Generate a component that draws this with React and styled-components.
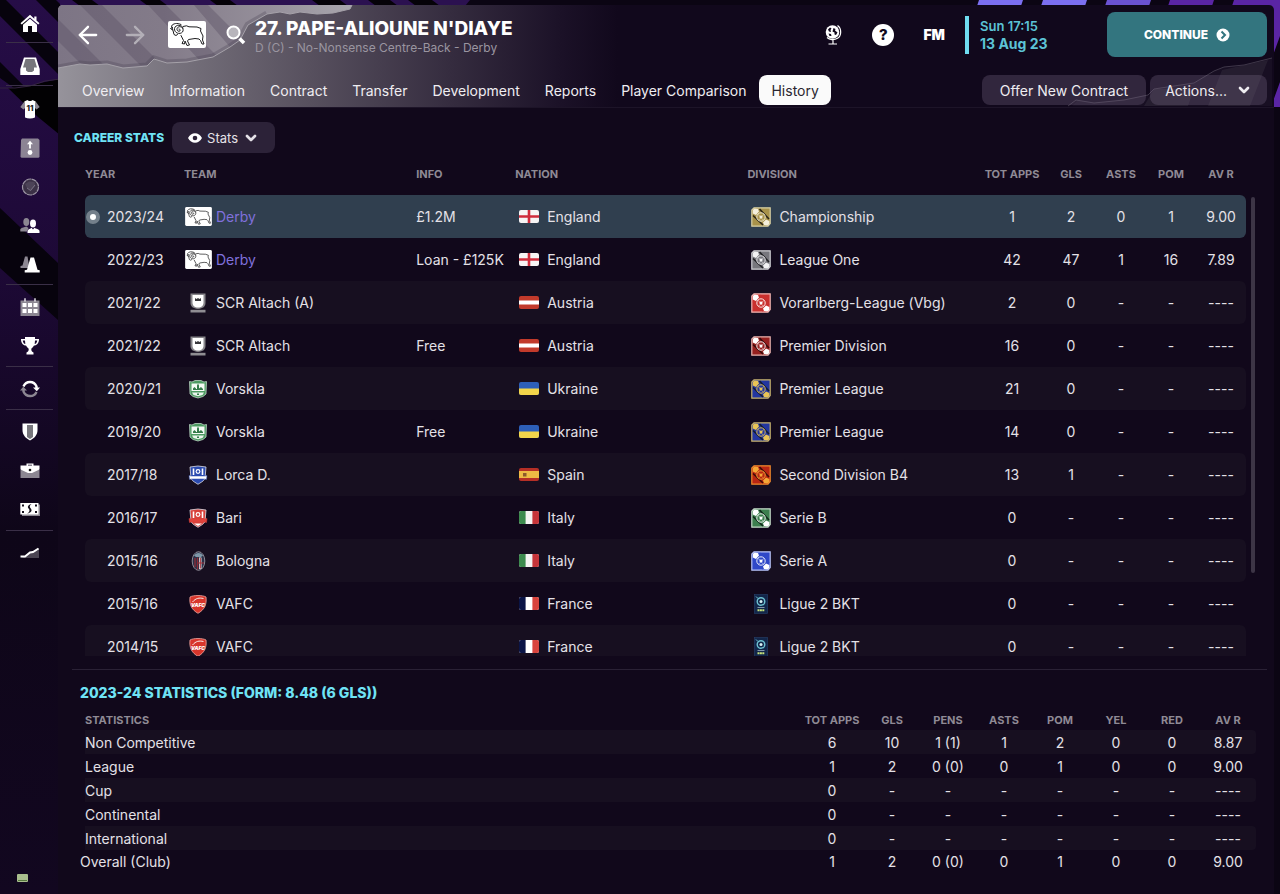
import React, { useState } from 'react'
import styled, { createGlobalStyle, css } from 'styled-components';
import { ArrowLeft, ArrowRight, ChevronDown } from 'lucide-react';

const careerRows = [
  { year: "2023/24", team: "Derby", crest: "derby", own: true, info: "£1.2M", nation: "England", division: "Championship", badge: "gold", stats: ["1", "2", "0", "1", "9.00"] },
  { year: "2022/23", team: "Derby", crest: "derby", own: true, info: "Loan - £125K", nation: "England", division: "League One", badge: "silver", stats: ["42", "47", "1", "16", "7.89"] },
  { year: "2021/22", team: "SCR Altach (A)", crest: "altach", info: "", nation: "Austria", division: "Vorarlberg-League (Vbg)", badge: "red", stats: ["2", "0", "-", "-", "----"] },
  { year: "2021/22", team: "SCR Altach", crest: "altach", info: "Free", nation: "Austria", division: "Premier Division", badge: "darkred", stats: ["16", "0", "-", "-", "----"] },
  { year: "2020/21", team: "Vorskla", crest: "vorskla", info: "", nation: "Ukraine", division: "Premier League", badge: "bluegold", stats: ["21", "0", "-", "-", "----"] },
  { year: "2019/20", team: "Vorskla", crest: "vorskla", info: "Free", nation: "Ukraine", division: "Premier League", badge: "bluegold", stats: ["14", "0", "-", "-", "----"] },
  { year: "2017/18", team: "Lorca D.", crest: "lorca", info: "", nation: "Spain", division: "Second Division B4", badge: "orange", stats: ["13", "1", "-", "-", "----"] },
  { year: "2016/17", team: "Bari", crest: "bari", info: "", nation: "Italy", division: "Serie B", badge: "green", stats: ["0", "-", "-", "-", "----"] },
  { year: "2015/16", team: "Bologna", crest: "bologna", info: "", nation: "Italy", division: "Serie A", badge: "blue", stats: ["0", "-", "-", "-", "----"] },
  { year: "2015/16", team: "VAFC", crest: "vafc", info: "", nation: "France", division: "Ligue 2 BKT", badge: "ligue2", stats: ["0", "-", "-", "-", "----"] },
  { year: "2014/15", team: "VAFC", crest: "vafc", info: "", nation: "France", division: "Ligue 2 BKT", badge: "ligue2", stats: ["0", "-", "-", "-", "----"] },
];

const seasonRows = [
  { name: "Non Competitive", stats: ["6", "10", "1 (1)", "1", "2", "0", "0", "8.87"] },
  { name: "League", stats: ["1", "2", "0 (0)", "0", "1", "0", "0", "9.00"] },
  { name: "Cup", stats: ["0", "-", "-", "-", "-", "-", "-", "----"] },
  { name: "Continental", stats: ["0", "-", "-", "-", "-", "-", "-", "----"] },
  { name: "International", stats: ["0", "-", "-", "-", "-", "-", "-", "----"] },
];
const overall = ["1", "2", "0 (0)", "0", "1", "0", "0", "9.00"];

const tabs = ["Overview", "Information", "Contract", "Transfer", "Development", "Reports", "Player Comparison", "History"];

const badgeColors = {
  gold: { bg: "#a8924a", mark: "#f4efdc", line: "#d8cfa4", dark: "#2c2617" },
  silver: { bg: "#77777d", mark: "#f2f2f4", line: "#cfcfd4", dark: "#232327" },
  red: { bg: "#c9302e", mark: "#ffffff", line: "#f0b6b3", dark: "#c9302e" },
  darkred: { bg: "#96201f", mark: "#ffffff", line: "#e6b3b0", dark: "#3a0b0b" },
  bluegold: { bg: "#2336a0", mark: "#e9c455", line: "#c9b36a", dark: "#131c33" },
  orange: { bg: "#b92613", mark: "#f5a836", line: "#f08a2c", dark: "#3f0d06" },
  green: { bg: "#3c7f4e", mark: "#ffffff", line: "#c5d9c9", dark: "#10291a" },
  blue: { bg: "#2f48c8", mark: "#ffffff", line: "#b9c4f4", dark: "#2f48c8" },
};

const RamBadge = ({ width, height }) => (
  <svg width={width} height={height} viewBox="0 0 38 27" aria-hidden="true">
    <rect width="38" height="27" rx="2" fill="#fff" />
    <g fill="none" stroke="#1c1c1e" strokeWidth="1" strokeLinejoin="round" strokeLinecap="round">
      <path d="M15 5.500L18.500 4.800L21 5.800L29 6L33 7.500L32.500 10L35 15L34.500 19L36 23L34 23L32.500 19.500L31 18L27 17.500L20.500 18.500L19.500 20L21.500 24L19 24.500L17 20L16.500 23L14 22.500L15.500 19.500L13 14.500" />
      <path d="M13 3.500C9 1.500 5 2.500 3.500 5L5 9.500L6 13.500L8 14.500L9.500 13.500" />
      <path d="M4.500 6.500L2.500 7.500L4.500 9" />
      <path d="M15 7C14 3.500 7.500 3 6.500 7.500C6 12 12 14 14.500 11C16.500 8 13.500 5 10.800 5.800C8 6.800 8.800 10.300 11 10.300C12.800 10 12.500 8 11 8" />
    </g>
  </svg>
);

const Shield = ({ main, band }) => (
  <svg width="20" height="20" viewBox="0 0 20 20" aria-hidden="true">
    <path d="M2 2L10 1L18 2L17 13.500C15.500 16.500 12.500 17.500 10 19.300C7.500 17.500 4.500 16.500 3 13.500Z" fill={main} stroke="#dfe0e8" strokeWidth=".8" />
    <path d="M5.500 3.500V10M14.500 3.500V10" stroke="#fff" strokeWidth="1.600" />
    <circle cx="10" cy="6.500" r="2.400" fill="#fff" />
    <circle cx="10" cy="6.500" r="1.200" fill={main} />
    <path d="M1 10.500L3 11L17 11L19 10.500L18.500 14.500L16.500 14H3.500L1.500 14.500Z" fill={band} stroke={main} strokeWidth=".5" />
    <path d="M6 15.500H14L10 18Z" fill={band === "#ffffff" ? main : "#fff"} />
  </svg>
);

function Crest({ name }) {
  if (name === "derby") return <RamBadge width={27} height={19} />;
  if (name === "altach") return (
    <svg width="20" height="20" viewBox="0 0 20 20" aria-hidden="true">
      <path d="M2.500 0.500H17.500V10C17.500 13.500 15 15.500 10 16C5 15.500 2.500 13.500 2.500 10Z" fill="#87858a" />
      <path d="M4.500 2H15.500V9.500C15.500 12.500 13.500 14.500 10 14.500C6.500 14.500 4.500 12.500 4.500 9.500Z" fill="#fff" />
      <path d="M7 5L8.500 6L10 5L11.500 6L13 5V8H7Z" fill="#39383c" />
      <path d="M2.500 16.800H17.500V19.500H2.500Z" fill="#8f8d92" />
    </svg>
  );
  if (name === "vorskla") return (
    <svg width="20" height="20" viewBox="0 0 20 20" aria-hidden="true">
      <path d="M1.500 2.500L4 3L7 1.500H13L16 3L18.500 2.500L18 15L15 17.500L10 19L5 17.500L2 15Z" fill="#4d9a62" stroke="#cfe6d5" strokeWidth=".7" />
      <path d="M3.500 4.500H16.500V12H3.500Z" fill="#f4faf5" />
      <path d="M5 11V9.500L6.500 8L8 9.500V10H9V6.500L10 4.500L11 6.500V9.500L13 8L15 10V11H5Z" fill="#337a49" />
      <path d="M4 13.500H16L14.500 16L10 17.300L5.500 16Z" fill="#e9f5ec" />
      <path d="M9 14.500H11V16H9Z" fill="#337a49" />
    </svg>
  );
  if (name === "lorca") return <Shield main="#2b4bb0" band="#ffffff" />;
  if (name === "bari") return <Shield main="#d8403a" band="#e0423c" />;
  if (name === "bologna") return (
    <svg width="20" height="20" viewBox="0 0 20 20" aria-hidden="true">
      <ellipse cx="10.500" cy="10" rx="6.300" ry="9.300" fill="#2a3148" stroke="#a8a4ac" strokeWidth=".8" />
      <path d="M6 4.500C8 1 13 1 15 4.500L13 6H8Z" fill="#7e98a8" />
      <path d="M7 7V16M9.500 6.500V18.500" stroke="#8c2a34" strokeWidth="1.300" />
      <path d="M11 6.500H13.500V18H11Z" fill="#e9e4e6" />
      <path d="M10 12H16M12.300 7V17.500" stroke="#a23038" strokeWidth="1.100" />
    </svg>
  );
  return (
    <svg width="20" height="20" viewBox="0 0 20 20" aria-hidden="true">
      <path d="M2 3C5 1 15 1 18 3C19 11 16 16 10 19.300C4 16 1 11 2 3Z" fill="#d8352b" stroke="#eda7a1" strokeWidth=".8" />
      <path d="M4.500 8C8 4 11 3.600 15.500 4.500" fill="none" stroke="#fff" strokeWidth=".9" />
      <text x="10" y="12.500" textAnchor="middle" fontSize="5" fontWeight="900" fontStyle="italic" fill="#fff">VAFC</text>
    </svg>
  );
}

function Flag({ nation }) {
  const id = "flag-" + nation;
  return (
    <svg width="20" height="13" viewBox="0 0 20 13" aria-hidden="true">
      <clipPath id={id}><rect width="20" height="13" rx="2" /></clipPath>
      <g clipPath={`url(#${id})`}>
        {nation === "England" && <><rect width="20" height="13" fill="#f6f4f4" /><path d="M0 6.500H20M10 0V13" stroke="#cf2b3b" strokeWidth="2.600" /></>}
        {nation === "Austria" && <><rect width="20" height="13" fill="#c23a2b" /><path d="M0 6.500H20" stroke="#fff" strokeWidth="4" /></>}
        {nation === "Ukraine" && <><rect width="20" height="13" fill="#2d5fb8" /><rect y="6.500" width="20" height="7" fill="#f2d54a" /></>}
        {nation === "Spain" && <><rect width="20" height="13" fill="#b52f26" /><rect y="3" width="20" height="7" fill="#edbb44" /><path d="M4 5H7.500V8.500H4Z" fill="#8d5a2b" /></>}
        {nation === "Italy" && <><rect width="20" height="13" fill="#f4f4f2" /><rect width="6.600" height="13" fill="#3d8b4e" /><rect x="13.400" width="7" height="13" fill="#c6353a" /></>}
        {nation === "France" && <><rect width="20" height="13" fill="#fff" /><rect width="6.600" height="13" fill="#0a1446" /><rect x="13.400" width="7" height="13" fill="#d8433d" /></>}
      </g>
    </svg>
  );
}

function DivisionBadge({ type }) {
  if (type === "ligue2") return (
    <svg width="20" height="20" viewBox="0 0 20 20" aria-hidden="true">
      <rect x="3.300" y=".5" width="13.400" height="19" fill="#12264a" stroke="#27406a" strokeWidth=".6" />
      <circle cx="10" cy="7.500" r="3.800" fill="none" stroke="#6fc3d2" strokeWidth="1.400" />
      <circle cx="10" cy="7.500" r="1.500" fill="#d8f2f5" />
      <path d="M5 2.500L7 4.500" stroke="#6fc3d2" />
      <path d="M6.500 13.500H13.500" stroke="#8fa2b8" strokeWidth=".9" />
      <path d="M6.500 16.300H13.500" stroke="#c8e27a" strokeWidth="2" strokeDasharray="2 .4" />
    </svg>
  );
  const c = badgeColors[type];
  return (
    <svg width="20" height="20" viewBox="0 0 20 20" aria-hidden="true">
      <path d="M3 .8H19.200V16.500L17 19.200H.8V3Z" fill={c.bg} stroke={c.line} strokeWidth="1.200" />
      <path d="M8.500 2L18 12M2 8.500L12 18" stroke={c.dark} strokeWidth="1.600" />
      <path d="M1.800 3L3.500 1.600L7 2L8 4.500L5 8L1.800 6.500Z" fill={c.mark} />
      <path d="M18.300 17L16.500 18.500L13 18L12 15.500L15 12.500L18.300 14Z" fill={c.mark} />
      <circle cx="10" cy="10" r="4.200" fill={c.bg} stroke={c.mark} strokeWidth=".9" />
      <path d="M7 7.500L9 9M13 7.500L11 9M8 13L9 11.500M12 13L11 11.500" stroke={c.line} strokeWidth=".7" />
      <path d="M10 8.300L11.700 9.500L11 11.500H9L8.300 9.500Z" fill={c.mark} />
    </svg>
  );
}

const Icon = ({ children }) => (
  <svg width="20" height="20" viewBox="0 0 20 20" fill="#fff" aria-hidden="true">{children}</svg>
);

// each inner array is one block of the sidebar, a line is drawn between blocks
const sideMenu = [
  [["Home", <Icon><path d="M10 1.800L.5 10.300L1.800 11.600L10 4.400L18.200 11.600L19.500 10.300L16.500 7.600V3.500H14.300V5.700Z" /><path d="M3 11.800L10 5.800L17 11.800V19H12V13H8V19H3Z" /></Icon>]],
  [["Inbox", <Icon><path d="M4 1.500H16L19.700 13V19H.3V13Z" /><path d="M5.500 3H14.500L17 11.500H14V14.500L12 16H8L6 14.500V11.500H3Z" fill="#77767c" /></Icon>]],
  [
    ["Squad", <Icon><path d="M4 3L.3 8L3.500 10.500L5 9ZM16 3L19.700 8L16.500 10.500L15 9Z" fill="#8c8792" /><path d="M4.300 2.500L7.500 1C8.500 2.300 11.500 2.300 12.500 1L15.700 2.500L15 10V18.500C12 19.800 8 19.800 5 18.500V10Z" /><text x="10" y="12" textAnchor="middle" fontSize="8" fontWeight="800" fill="#222">11</text></Icon>],
    ["Tactics", <Icon><path d="M2 .5H18L19.500 2V19L18.500 19.800H1.500L.5 19L1 2Z" fill="#8c8494" /><path d="M10 2.800L13 6.300H10.900V10.500H9.100V6.300H7Z" /><circle cx="10" cy="14.500" r="2.400" /></Icon>],
    ["Dynamics", <Icon><circle cx="10.500" cy="10" r="8" fill="#3b3146" stroke="#9c95a4" strokeWidth="1.200" strokeDasharray="5 .5" /><path d="M5 7L9 4.500L14.500 5L15 9L11 14L9.500 12L7 11Z" fill="#4c4357" /><path d="M15 8L10.500 13.500L7 11" fill="none" stroke="#857d8f" strokeWidth=".8" /></Icon>],
    ["Staff", <Icon><g fill="#8c8792"><ellipse cx="6.300" cy="6" rx="3" ry="4" /><path d="M.3 15.500V13C2 11.500 4.500 11.500 6.300 10.500L8.500 12L7 15.500Z" /></g><ellipse cx="13" cy="7.500" rx="3" ry="4" /><path d="M7.500 17V15C8 13 10.500 13 11.500 11.800L13 13.500L14.500 11.800C16 13 19 13 19.500 15V17Z" /></Icon>],
    ["Training", <Icon><path d="M5 1.500H7.500L9.500 13H.5V11L2.500 10.500Z" fill="#8c8792" /><path d="M10.500 2.500H14L17.500 14.800L19.700 15.300V17.500H4.700V15.300L7 14.800Z" /></Icon>],
  ],
  [
    ["Schedule", <Icon><path d="M.5 2.500H19.500V18H.5Z" fill="#8c8792" /><path d="M2.500 5H6.500V9H2.500ZM8 5H12V9H8ZM13.500 5H17.500V9H13.500ZM2.500 11H6.500V15H2.500ZM8 11H12V15H8ZM13.500 11H17.500V15H13.500Z" /><path d="M5 .3V3.500M15 .3V3.500" stroke="#fff" strokeWidth="1.300" /></Icon>],
    ["Competitions", <Icon><path d="M5 0H15V2H19C19 6 17 8.500 14 8.500C13 10.500 11.500 11 11.300 12C11.300 13.500 11.500 14.500 13.500 15.500V17.500H6.500V15.500C8.500 14.500 8.700 13.500 8.700 12C8.500 11 7 10.500 6 8.500C3 8.500 1 6 1 2H5ZM2.700 3.500C3 5.500 4 6.800 5.300 7L5 3.500ZM15 3.500L14.700 7C16 6.800 17 5.500 17.300 3.500Z" fillRule="evenodd" /></Icon>],
  ],
  [["Transfers", <Icon><path d="M3.500 6.500C6 .5 14 .5 16.500 6.500V8" fill="none" stroke="#fff" strokeWidth="2.400" /><path d="M13 7.500H20L16.800 11.300Z" /><path d="M16.500 12C14 17.500 6 17.500 3.500 11.500V10" fill="none" stroke="#8c8792" strokeWidth="2.400" /><path d="M0 10.500H7L3.300 6.800Z" fill="#8c8792" /></Icon>]],
  [
    ["Club", <Icon><path d="M2.500 .5H17.500V7C17.500 12 14.500 15 10 17.500C5.500 15 2.500 12 2.500 7Z" /><path d="M7 2H13V14L10 16L7 14Z" fill="#77767c" /></Icon>],
    ["Board", <Icon><path d="M.5 8H19.500V16H.5Z" fill="#8c8792" /><path d="M.5 3.500H6.500V1.500H13.500V3.500H19.500V7.500L12 11H8L.5 7.500ZM8 2.700V3.500H12V2.700Z" fillRule="evenodd" /><circle cx="10" cy="8" r="1.300" fill="#111" /></Icon>],
    ["Finances", <Icon><path d="M2 3.500H20V15H2Z" fill="#8c8792" /><path d="M.3 2H18.500V13.500H.3Z" /><path d="M2 3.500H4V5.500H2ZM15 3.500H17V5.500H15ZM2 10H4V12H2ZM15 10H17V12H15ZM11.500 3C7.500 4 7 6.500 9 8C10 9.500 9.500 11 7 12.800C11.500 11.500 12.500 9.500 10.800 7.500C9.300 6 9.500 4.500 11.500 3Z" fill="#15101c" /></Icon>],
  ],
  [["Data Hub", <Icon><path d="M1 14L6 12L12 8L19 4V14Z" fill="#4a4452" /><path d="M.5 12.500H5L10 8.500L13 8L18.500 4.500" fill="none" stroke="#fff" strokeWidth="2" /></Icon>]],
];

function PlayerHeader() {
  return (
    <Header>
      <TornPaper viewBox="0 0 560 102" preserveAspectRatio="xMinYMin slice" aria-hidden="true">
        <defs>
          <linearGradient id="fade" x1="0" x2="1">
            <stop offset="0" stopColor="#96939b" />
            <stop offset=".25" stopColor="#716c77" />
            <stop offset=".45" stopColor="#57505e" />
            <stop offset=".7" stopColor="#352c3f" />
            <stop offset=".9" stopColor="#1b1127" />
            <stop offset="1" stopColor="#11081c" />
          </linearGradient>
          <linearGradient id="sheet" x1="0" x2="1">
            <stop offset="0" stopColor="#7d7585" />
            <stop offset=".35" stopColor="#837b89" />
            <stop offset=".7" stopColor="#958f9a" />
            <stop offset="1" stopColor="#aaa7ae" />
          </linearGradient>
          <clipPath id="torn">
            <path d="M0 63L22 59L32 60L49 59L65 63L89 61L96 54L109 58L129 57L155 52L172 42L182 35L190 20L209 9L222 7L232 9L242 7L259 9L275 8L292 4L294 0H0Z" />
          </clipPath>
        </defs>
        <rect width="560" height="102" fill="url(#fade)" />
        <g clipPath="url(#torn)">
          <rect width="300" height="66" fill="url(#sheet)" />
          <path d="M0 14L48 62H26L0 36ZM22 0H44L104 60H82ZM90 0H108L160 52L144 58ZM136 0H150L184 34L172 42Z" fill="#5a5163" opacity=".4" />
          <path d="M0 63L22 59L32 60L49 59L65 63L89 61L96 54L109 58L129 57L155 52L172 42L182 35L190 20L209 9" fill="none" stroke="#4a4253" strokeWidth="7" opacity=".3" />
        </g>
        <path d="M0 63L22 59L32 60L49 59L65 63L89 61L96 54L109 58L129 57L155 52L172 42L182 35L190 20L209 9L222 7L232 9L242 7L259 9L275 8L292 4L294 0" fill="none" stroke="#a5a1a9" />
      </TornPaper>
      <TornCorner viewBox="0 0 210 50" aria-hidden="true">
        <path d="M8 49L14 43L30 46L60 43L84 38L90 32L130 26L150 14L160 10L180 8L208 1V49Z" fill="#ffffff" opacity=".03" />
        <path d="M90 32H130L124 49H80ZM158 13L204 3L186 49H144Z" fill="#fff" opacity=".06" />
        <path d="M4 49L12 43L30 46L60 43L84 38L90 32L130 26L150 14L160 10L180 8L208 1" fill="none" stroke="#3f3749" />
      </TornCorner>
      <TopRow>
        <NavGroup>
          <IconButton aria-label="Back"><ArrowLeft size={28} strokeWidth={2} /></IconButton>
          <IconButton aria-label="Forward" $dim><ArrowRight size={28} strokeWidth={2} /></IconButton>
          <RamBadge width={38} height={27} />
          <IconButton aria-label="Search">
            <svg width="20" height="20" viewBox="0 0 20 20"><circle cx="7.500" cy="7.500" r="6" fill="#b8b5bc" stroke="#fff" strokeWidth="2" /><path d="M13.500 13.500L18 18" stroke="#fff" strokeWidth="3.500" /></svg>
          </IconButton>
        </NavGroup>
        <Title>
          <h1>27. PAPE-ALIOUNE N'DIAYE</h1>
          <p>D (C) - No-Nonsense Centre-Back - Derby</p>
        </Title>
        <Tools>
          <IconButton aria-label="World">
            <svg width="20" height="22" viewBox="0 0 20 22"><circle cx="9.500" cy="8" r="6.800" fill="#fff" /><path d="M5 5.500L7 3.500L8.500 4.500L7.500 6L8 8L6 7.500ZM10.500 4L12.500 5L12 6.500L14.500 8.500L13 11L11.500 10.500L11.500 8.500L9.500 7.500ZM5.500 9.500L8 10L8.500 12L6.500 12Z" fill="#11081c" /><path d="M14.500 1.500C19 4.500 18.500 12 14.500 14.300C11 16.500 6.500 16 4 13.500M10 15.500V19.500M5.500 20H14" fill="none" stroke="#fff" strokeWidth="1.200" /></svg>
          </IconButton>
          <HelpButton aria-label="Help">?</HelpButton>
          <FmButton>FM</FmButton>
        </Tools>
        <DateBlock>
          <span>Sun 17:15</span>
          <strong>13 Aug 23</strong>
        </DateBlock>
        <ContinueButton>
          CONTINUE
          <svg width="14" height="14" viewBox="0 0 14 14" aria-hidden="true"><circle cx="7" cy="7" r="6.500" fill="#fff" /><path d="M5.500 3.500L9 7L5.500 10.500" fill="none" stroke="#33757f" strokeWidth="2" /></svg>
        </ContinueButton>
      </TopRow>
      <TabRow>
        <Tabs>
          {tabs.map((tab) => (
            <Tab key={tab} href="#" $active={tab === "History"}>{tab}</Tab>
          ))}
        </Tabs>
        <PanelButton $wide>Offer New Contract</PanelButton>
        <PanelButton aria-haspopup="menu">Actions...<ChevronDown size={16} strokeWidth={4} /></PanelButton>
      </TabRow>
    </Header>
  );
}

function CareerStats() {
  const [offset, setOffset] = useState(0);

  const onScroll = (e) => {
    const { scrollTop, scrollHeight } = e.currentTarget;
    setOffset(scrollTop / scrollHeight * 100);
  }

  return (
    <Career>
      <Toolbar>
        <SectionTitle>CAREER STATS</SectionTitle>
        <ViewPicker>
          <svg width="14" height="10" viewBox="0 0 14 10" aria-hidden="true"><path d="M0 5C3 -1.300 11 -1.300 14 5C11 11.300 3 11.300 0 5Z" fill="#fff" /><circle cx="7" cy="5" r="2.300" fill="#2c2238" /></svg>
          <select aria-label="View" defaultValue="Stats"><option>Stats</option></select>
          <ChevronDown size={16} strokeWidth={4} />
        </ViewPicker>
      </Toolbar>
      <ScrollArea>
        <Scroller onScroll={onScroll}>
          <CareerTable>
            <colgroup>
              <Col $w="99px" /><Col $w="20%" /><Col $w="99px" /><Col $w="20%" /><Col />
              <Col $w="68px" /><Col $w="50px" /><Col $w="50px" /><Col $w="50px" /><Col $w="50px" />
            </colgroup>
            <thead>
              <tr>
                <Th>YEAR</Th><Th>TEAM</Th><Th>INFO</Th><Th>NATION</Th><Th>DIVISION</Th>
                <Th $num>TOT APPS</Th><Th $num>GLS</Th><Th $num>ASTS</Th><Th $num>POM</Th><Th $num>AV R</Th>
              </tr>
            </thead>
            <tbody>
              {careerRows.map((row, i) => (
                <CareerRow key={i} $selected={i === 0} $striped={i % 2 === 0}>
                  <td><YearCell>{i === 0 ? <Bullet /> : <span />}{row.year}</YearCell></td>
                  <td><MediaCell $own={row.own}><Slot><Crest name={row.crest} /></Slot>{row.team}</MediaCell></td>
                  <td>{row.info}</td>
                  <td><MediaCell><Slot><Flag nation={row.nation} /></Slot>{row.nation}</MediaCell></td>
                  <td><MediaCell><Slot><DivisionBadge type={row.badge} /></Slot>{row.division}</MediaCell></td>
                  {row.stats.map((value, n) => <NumCell key={n}>{value}</NumCell>)}
                </CareerRow>
              ))}
            </tbody>
          </CareerTable>
        </Scroller>
        <ScrollTrack><ScrollThumb style={{ top: offset + "%" }} /></ScrollTrack>
      </ScrollArea>
    </Career>
  );
}

function SeasonStats() {
  return (
    <Season>
      <SectionTitle $large>2023-24 STATISTICS (FORM: 8.48 (6 GLS))</SectionTitle>
      <SeasonTable>
        <colgroup>
          <Col /><Col $w="64px" />
          {[1, 2, 3, 4, 5, 6, 7].map((n) => <Col key={n} $w="56px" />)}
        </colgroup>
        <thead>
          <tr>
            <Th>STATISTICS</Th>
            {["TOT APPS", "GLS", "PENS", "ASTS", "POM", "YEL", "RED", "AV R"].map((h) => <Th key={h} $num>{h}</Th>)}
          </tr>
        </thead>
        <tbody>
          {seasonRows.map((row, i) => (
            <SeasonRow key={row.name} $striped={i % 2 === 0}>
              <td>{row.name}</td>
              {row.stats.map((value, n) => <NumCell key={n}>{value}</NumCell>)}
            </SeasonRow>
          ))}
        </tbody>
        <tfoot>
          <tr>
            <td>Overall (Club)</td>
            {overall.map((value, n) => <NumCell key={n}>{value}</NumCell>)}
          </tr>
        </tfoot>
      </SeasonTable>
    </Season>
  );
}

function App() {
  return (
    <Page>
      <GlobalStyle />
      <Backdrop viewBox="0 0 1280 894" preserveAspectRatio="xMinYMin slice" aria-hidden="true">
        <defs>
          <linearGradient id="side" x1="0" x2="0" y1="0" y2="1">
            <stop offset="0" stopColor="#260d47" />
            <stop offset=".3" stopColor="#1d0936" />
            <stop offset=".6" stopColor="#0e0618" />
            <stop offset="1" stopColor="#120720" />
          </linearGradient>
        </defs>
        <rect width="1280" height="894" fill="#0b0513" />
        <rect width="60" height="894" fill="url(#side)" />
        <path d="M0 0H6L60 54V76L0 16ZM36 0H56L60 4V24ZM0 62L24 86L14 88L0 78ZM0 208L58 263V320L0 268Z" fill="#07030d" />
        <path d="M8 88L30 86L45 82L60 79V135L38 117Z" fill="#020103" />
        <path d="M0 88L15 88L30 86L45 81L60 79" fill="none" stroke="#33233f" />
        <path d="M60 0H470L465 6H60Z" fill="#2b1150" />
        <path d="M72 0H92L100 6H80ZM140 0H160L168 6H148ZM210 0H230L238 6H218ZM312 0H340L348 6H320ZM368 0H390L398 6H376ZM408 0H432L440 6H416Z" fill="#050208" />
        <path d="M979 0H1023L1021 6H977ZM1043 0H1087L1085 6H1041Z" fill="#7b6ff0" />
        <path d="M1107 0H1151L1149 6H1105Z" fill="#6a52d2" />
        <path d="M1170 0H1214L1212 6H1168ZM1234 0H1280V36L1272 58V6H1232ZM1280 82V107H1272V104Z" fill="#5a25a5" />
      </Backdrop>
      <Sidebar>
        {sideMenu.map((block, i) => (
          <SideBlock key={i}>
            {block.map(([label, icon]) => <SideButton key={label} aria-label={label}>{icon}</SideButton>)}
          </SideBlock>
        ))}
        <Status aria-hidden="true">
          <svg width="12" height="9" viewBox="0 0 12 9"><rect width="11" height="8" rx="1" fill="#a9be8e" /><path d="M1 6H10V7H1Z" fill="#56793d" /></svg>
        </Status>
      </Sidebar>
      <Main>
        <PlayerHeader />
        <Body>
          <CareerStats />
          <SeasonStats />
        </Body>
      </Main>
    </Page>
  )
}

export default App

const GlobalStyle = createGlobalStyle`
  *, *::before, *::after {
    box-sizing: border-box;
  }
  body {
    margin: 0;
    background-color: #0b0513;
    color: #e4e1e7;
    font-family: Inter, "Liberation Sans", sans-serif;
    font-size: 14px;
  }
  button, select {
    font: inherit;
    color: inherit;
    background: none;
    border: none;
    padding: 0;
    cursor: pointer;
  }
  h1, h2, p {
    margin: 0;
  }
`;

const Page = styled.div`
  position: relative;
  display: flex;
  height: 100vh;
`;

const Backdrop = styled.svg`
  position: absolute;
  top: 0;
  left: 0;
  width: 100%;
  height: 100%;
`;

const Sidebar = styled.nav`
  position: relative;
  display: flex;
  flex-direction: column;
  flex: 0 0 58px;
  padding: 3px 5px 0 6px;
`;

const SideBlock = styled.div`
  display: flex;
  flex-direction: column;
  & + & {
    border-top: 1px solid #3a2f47;
    padding-top: 3px;
  }
`;

const SideButton = styled.button`
  display: flex;
  align-items: center;
  justify-content: center;
  height: 39px;
`;

const Status = styled.div`
  margin-top: auto;
  padding: 0 0 8px 11px;
`;

const Main = styled.main`
  position: relative;
  display: flex;
  flex-direction: column;
  flex: 1;
  min-width: 0;
  margin: 5px 6px 0 0;
`;

const Header = styled.header`
  position: relative;
  padding: 7px 7px 2px 12px;
  overflow: hidden;
  border-radius: 5px 5px 0 0;
  background-color: #11081c;
`;

const TornPaper = styled.svg`
  position: absolute;
  top: 0;
  left: 0;
  width: 560px;
  height: 102px;
`;

const TornCorner = styled.svg`
  position: absolute;
  right: 0;
  bottom: 0;
  width: 210px;
  height: 50px;
`;

const TopRow = styled.div`
  position: relative;
  display: flex;
  align-items: center;
  height: 45px;
`;

const NavGroup = styled.div`
  display: flex;
  align-items: center;
  gap: 20px;
  padding: 0 11px 0 4px;
`;

const IconButton = styled.button`
  display: flex;
  align-items: center;
  justify-content: center;
  color: ${(props) => (props.$dim ? "#b3afb7" : "#ffffff")};
  .lucide {
    margin-right: -1px;
  }
`;

const Title = styled.div`
  padding-top: 4px;
  margin-left: -2px;
  h1 {
    color: white;
    font-size: 19px;
    font-weight: 800;
    line-height: 22px;
  }
  p {
    color: #9a95a0;
    font-size: 12px;
    line-height: 16px;
  }
`;

const Tools = styled.div`
  display: flex;
  align-items: center;
  gap: 29px;
  margin-left: auto;
`;

const HelpButton = styled.button`
  width: 22px;
  height: 22px;
  border-radius: 50%;
  background-color: white;
  color: #11081c;
  font-size: 15px;
  font-weight: 800;
`;

const FmButton = styled.button`
  color: white;
  font-size: 14px;
  font-weight: 900;
`;

const DateBlock = styled.div`
  display: flex;
  flex-direction: column;
  justify-content: center;
  width: 142px;
  height: 38px;
  margin-left: 20px;
  padding-left: 11px;
  border-left: 4px solid #6fdcf0;
  color: #5cc3d6;
  line-height: 17px;
  span {
    font-size: 13px;
    font-weight: 600;
  }
  strong {
    font-size: 14px;
    font-weight: 700;
  }
`;

const ContinueButton = styled.button`
  display: flex;
  align-items: center;
  justify-content: center;
  gap: 8px;
  width: 160px;
  height: 45px;
  border-radius: 8px;
  background-color: #33757f;
  color: white;
  font-size: 12px;
  font-weight: 800;
`;

const TabRow = styled.div`
  position: relative;
  display: flex;
  align-items: center;
  gap: 4px;
  margin-top: 18px;
`;

const Tabs = styled.div`
  display: flex;
  gap: 1px;
  margin-right: auto;
`;

const Tab = styled.a`
  height: 30px;
  padding: 0 12px;
  border-radius: 8px;
  color: #efedf1;
  line-height: 32px;
  text-decoration: none;
  white-space: nowrap;
  ${(props) => props.$active && css`
    background-color: #fafafa;
    color: #2a2630;
  `}
`;

const PanelButton = styled.button`
  display: flex;
  align-items: center;
  gap: 9px;
  height: 30px;
  padding: 0 ${(props) => (props.$wide ? "18px" : "15px")};
  border-radius: 8px;
  background-color: rgba(125, 110, 140, 0.3);
  color: #efedf1;
  white-space: nowrap;
`;

const Body = styled.div`
  display: flex;
  flex-direction: column;
  flex: 1;
  min-height: 0;
  background-color: #11081b;
  border-top: 1px solid #1d1428;
`;

const Career = styled.section`
  display: flex;
  flex-direction: column;
  flex: 1;
  min-height: 0;
  padding: 14px 19px 0 27px;
`;

const Toolbar = styled.div`
  display: flex;
  align-items: center;
  gap: 8px;
  margin-left: -11px;
`;

const SectionTitle = styled.h2`
  color: #6fe3f5;
  font-size: ${(props) => (props.$large ? "14px" : "12px")};
  font-weight: 800;
  line-height: 18px;
`;

const ViewPicker = styled.label`
  display: flex;
  align-items: center;
  gap: 5px;
  height: 31px;
  padding: 0 16px;
  border-radius: 8px;
  background-color: #2c2238;
  select {
    appearance: none;
    font-size: 13px;
  }
`;

const ScrollArea = styled.div`
  display: flex;
  flex: 1;
  gap: 5px;
  min-height: 0;
`;

const Scroller = styled.div`
  flex: 1;
  min-width: 0;
  overflow-y: auto;
  scrollbar-width: none;
`;

const ScrollTrack = styled.div`
  position: relative;
  width: 4px;
  margin-top: 44px;
`;

const ScrollThumb = styled.div`
  position: absolute;
  width: 4px;
  height: 82%;
  border-radius: 2px;
  background-color: #3d3546;
`;

const Col = styled.col`
  width: ${(props) => props.$w || "auto"};
`;

const Th = styled.th`
  padding: 0;
  color: #8f8a95;
  font-size: 11px;
  font-weight: 700;
  text-align: ${(props) => (props.$num ? "center" : "left")};
  white-space: nowrap;
`;

const CareerTable = styled.table`
  width: 100%;
  table-layout: fixed;
  border-spacing: 0;
  thead th {
    position: sticky;
    top: 0;
    height: 42px;
    background-color: #11081b;
  }
`;

const CareerRow = styled.tr`
  td {
    height: 43px;
    padding: 0;
    white-space: nowrap;
    background-color: ${(props) => (props.$selected ? "#303f4f" : props.$striped ? "#170f20" : "transparent")};
  }
  td:first-child {
    border-radius: 6px 0 0 6px;
  }
  td:last-child {
    border-radius: 0 6px 6px 0;
  }
`;

const NumCell = styled.td`
  text-align: center;
`;

const YearCell = styled.div`
  display: grid;
  grid-template-columns: 16px auto;
  align-items: center;
  gap: 6px;
`;

const Bullet = styled.span`
  width: 14px;
  height: 14px;
  margin-left: 1px;
  border: 4px solid #74808b;
  border-radius: 50%;
  background-color: white;
`;

const MediaCell = styled.div`
  display: flex;
  align-items: center;
  gap: 4px;
  color: ${(props) => (props.$own ? "#8070dc" : "inherit")};
`;

const Slot = styled.span`
  display: flex;
  justify-content: center;
  width: 28px;
`;

const Season = styled.section`
  margin: 13px 7px 0 14px;
  padding: 14px 11px 22px 8px;
  border-top: 1px solid #2a2135;
`;

const SeasonTable = styled.table`
  width: 100%;
  margin-top: 7px;
  table-layout: fixed;
  border-spacing: 0;
  th, td {
    height: 21px;
    padding: 0;
    white-space: nowrap;
  }
  th:first-child {
    padding-left: 5px;
  }
  tfoot td {
    height: 22px;
  }
`;

const SeasonRow = styled.tr`
  td {
    height: 24px;
    background-color: ${(props) => (props.$striped ? "#170f20" : "transparent")};
    background-clip: padding-box;
  }
  td:first-child {
    border-left: 5px solid transparent;
  }
  td:last-child {
    border-radius: 0 4px 4px 0;
  }
`;
